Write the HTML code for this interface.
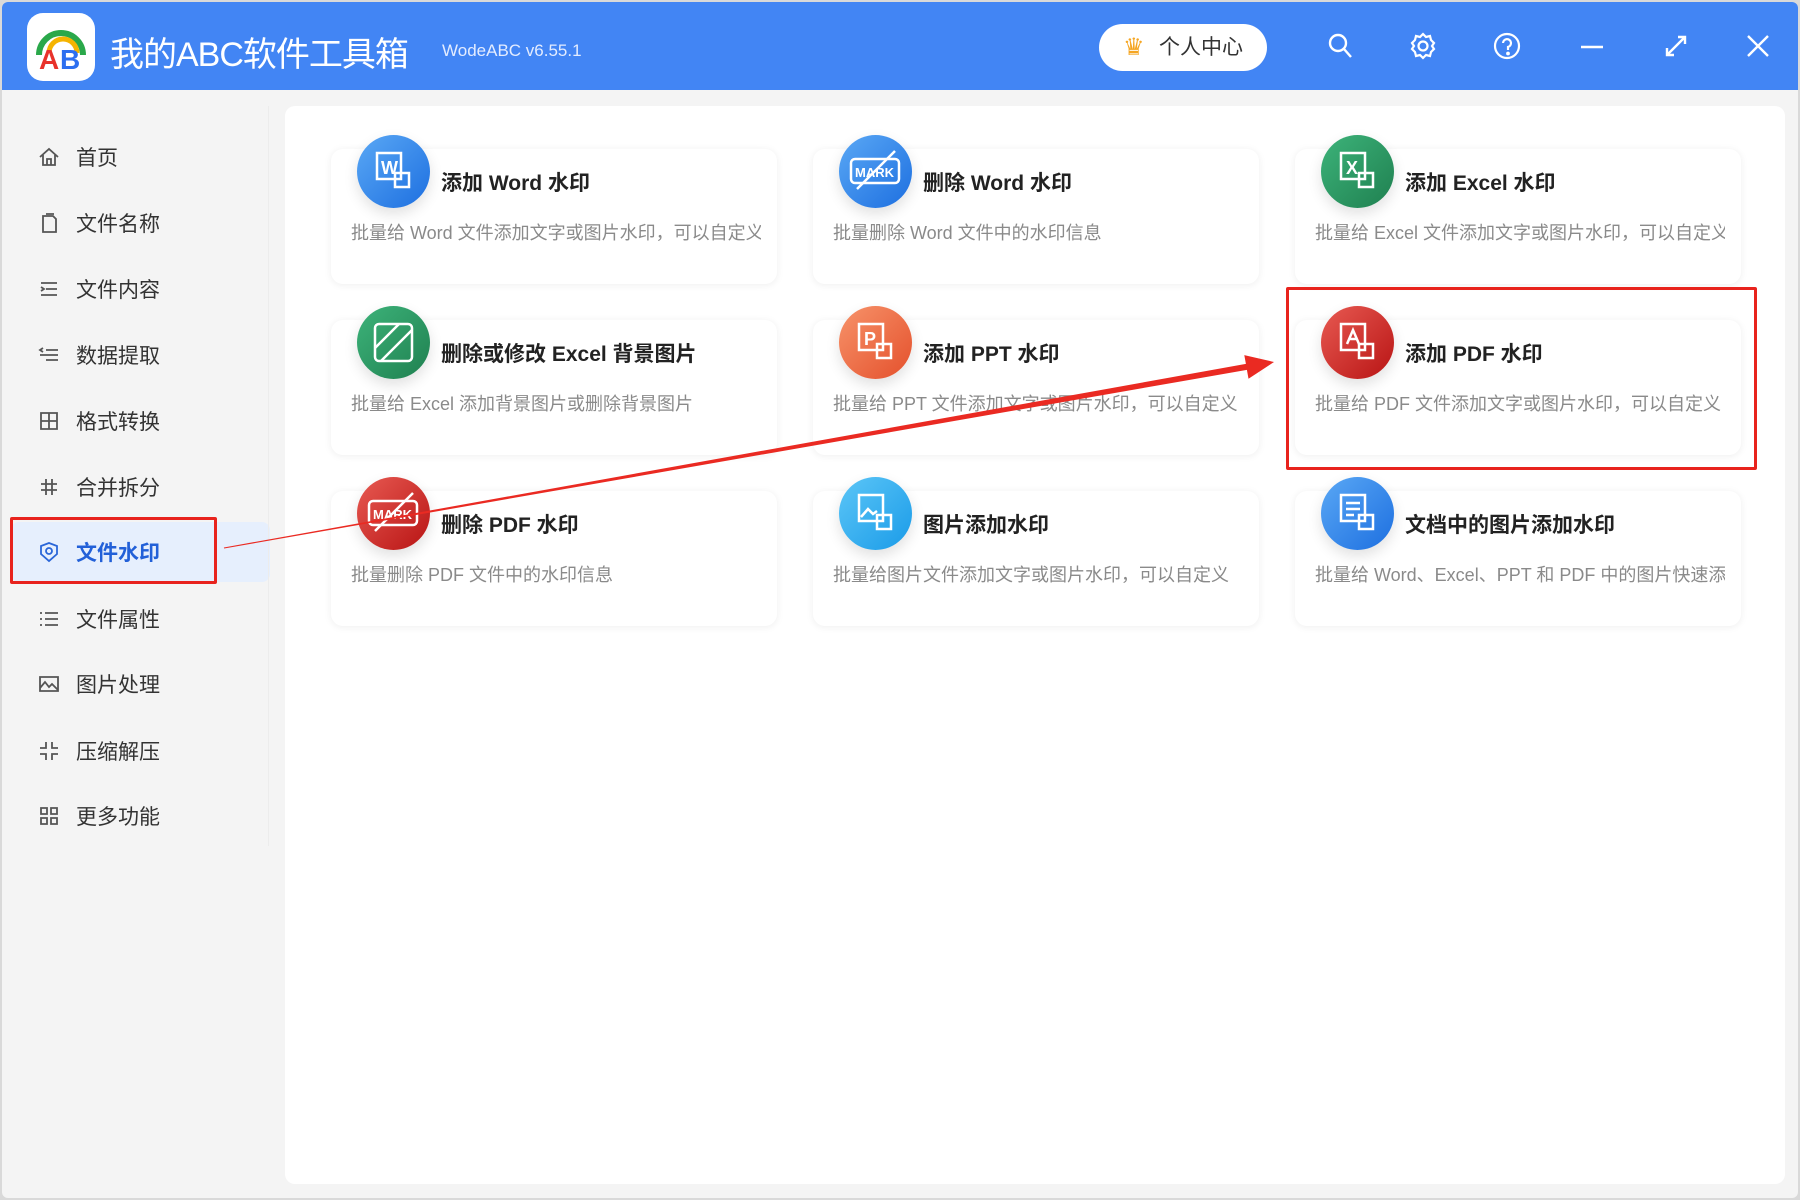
<!DOCTYPE html>
<html><head><meta charset="utf-8"><style>
*{margin:0;padding:0;box-sizing:border-box}
body{width:1800px;height:1200px;background:#d9d9d9;position:relative;overflow:hidden;font-family:"Liberation Sans","Noto Sans CJK SC",sans-serif}
.win{position:absolute;left:2px;top:2px;width:1796px;height:1196px;background:#f4f4f4;border-radius:6px;overflow:hidden}
.hdr{position:absolute;left:0;top:0;width:100%;height:88px;background:#4285f4}
.logo{position:absolute;left:25px;top:11px;width:68px;height:68px;background:#fff;border-radius:16px}
.title{position:absolute;left:108px;top:25px;color:#fff;font-size:34px;letter-spacing:-1px}
.ver{position:absolute;left:440px;top:39px;color:#e3ecff;font-size:17px}
.btn{position:absolute;left:1097px;top:22px;width:168px;height:47px;background:#fff;border-radius:24px;font-size:21px;color:#333;line-height:47px;padding-left:60px}
.ic{position:absolute;top:30px}
.item{position:absolute;left:36px;height:40px;font-size:21px;color:#333;display:flex;align-items:center}
.item svg{margin-right:16px}
.act{position:absolute;left:9px;top:520px;width:259px;height:60px;background:#e6effd;border-radius:8px}
.panel{position:absolute;left:283px;top:104px;width:1500px;height:1078px;background:#fff;border-radius:10px}
.card{position:absolute;width:446px;height:135px;background:#fff;border-radius:12px;box-shadow:0 1px 8px rgba(0,0,0,.07)}
.card .c{position:absolute;left:26px;top:-14px;width:73px;height:73px;border-radius:50%;box-shadow:0 6px 14px rgba(0,0,0,.12)}
.card .t{position:absolute;left:110px;top:18px;font-size:21px;font-weight:bold;color:#222}
.card .d{position:absolute;left:20px;top:70px;width:410px;white-space:nowrap;overflow:hidden;font-size:18px;color:#8a8a8a}
</style></head><body>
<div class="win">
<div class="hdr">
 <div class="logo"><svg width="68" height="68" viewBox="0 0 68 68"><path d="M12 42 A22 22 0 0 1 56 42" fill="none" stroke="#2aa84a" stroke-width="6"/><path d="M22 40 A14 14 0 0 1 50 40" fill="none" stroke="#f5b400" stroke-width="5"/><text x="12" y="56" font-size="28" font-weight="bold" fill="#e8322b" font-family="Liberation Sans">A</text><text x="33" y="56" font-size="28" font-weight="bold" fill="#2d6ff0" font-family="Liberation Sans">B</text></svg></div>
 <div class="title">我的ABC软件工具箱</div>
 <div class="ver">WodeABC v6.55.1</div>
 <div class="btn"><span style="position:absolute;left:24px;top:0;color:#f5a623;font-size:24px">♛</span>个人中心</div>
 <svg class="ic" style="left:1324px" width="28" height="28" viewBox="0 0 28 28" fill="none" stroke="#fff" stroke-width="2.4"><circle cx="12" cy="11" r="8"/><path d="M18 17l7 8"/></svg>
 <svg class="ic" style="left:1407px" width="28" height="28" viewBox="0 0 28 28" fill="none" stroke="#fff" stroke-width="2.2"><circle cx="14" cy="14" r="4.5"/><path d="M14 2l3 3 4-1 1 4 3 3-2 3 2 3-3 3-1 4-4-1-3 3-3-3-4 1-1-4-3-3 2-3-2-3 3-3 1-4 4 1z"/></svg>
 <svg class="ic" style="left:1491px" width="28" height="28" viewBox="0 0 28 28" fill="none" stroke="#fff" stroke-width="2.2"><circle cx="14" cy="14" r="12"/><path d="M10 11a4 4 0 1 1 5 4v3"/><circle cx="15" cy="21.5" r=".8" fill="#fff"/></svg>
 <svg class="ic" style="left:1576px" width="28" height="28" viewBox="0 0 28 28" stroke="#fff" stroke-width="2.4"><path d="M3 15h22"/></svg>
 <svg class="ic" style="left:1660px" width="28" height="28" viewBox="0 0 28 28" fill="none" stroke="#fff" stroke-width="2.4"><path d="M5 23L23 5M16 5h7v7M5 16v7h7"/></svg>
 <svg class="ic" style="left:1742px" width="28" height="28" viewBox="0 0 28 28" stroke="#fff" stroke-width="2.4"><path d="M4 4l20 20M24 4L4 24"/></svg>
</div>
<div class="act"></div>
<div style="position:absolute;left:266px;top:104px;width:1px;height:740px;background:#ececec"></div>
<div class="item" style="top:135px"><svg width="22" height="22" viewBox="0 0 22 22" fill="none" stroke="#555" stroke-width="1.8"><path d="M2 11L11 3l9 8M5 9v10h12V9M9 19v-6h4v6"/></svg>首页</div>
<div class="item" style="top:201px"><svg width="22" height="22" viewBox="0 0 22 22" fill="none" stroke="#555" stroke-width="1.8"><path d="M5 4h10l3 3v13H5zM8 2h8"/></svg>文件名称</div>
<div class="item" style="top:267px"><svg width="22" height="22" viewBox="0 0 22 22" fill="none" stroke="#555" stroke-width="1.8"><path d="M3 5h16M8 11h11M3 17h16M3 9l3 2-3 2"/></svg>文件内容</div>
<div class="item" style="top:333px"><svg width="22" height="22" viewBox="0 0 22 22" fill="none" stroke="#555" stroke-width="1.8"><path d="M8 6h12M2 11h18M8 16h12M5 4l-3 2 3 2"/></svg>数据提取</div>
<div class="item" style="top:399px"><svg width="22" height="22" viewBox="0 0 22 22" fill="none" stroke="#555" stroke-width="1.8"><path d="M3 3h16v16H3zM11 3v16M3 11h16"/></svg>格式转换</div>
<div class="item" style="top:465px"><svg width="22" height="22" viewBox="0 0 22 22" fill="none" stroke="#555" stroke-width="1.8"><path d="M8 3v16M14 3v16M3 8h16M3 14h16"/></svg>合并拆分</div>
<div class="item" style="top:530px;color:#2260d8;font-weight:bold"><svg width="22" height="22" viewBox="0 0 22 22" fill="none" stroke="#2a66d8" stroke-width="1.8"><path d="M11 2l8 3v8l-8 7-8-7V5z"/><circle cx="11" cy="10" r="3"/></svg>文件水印</div>
<div class="item" style="top:597px"><svg width="22" height="22" viewBox="0 0 22 22" fill="none" stroke="#555" stroke-width="1.8"><path d="M7 5h13M7 11h13M7 17h13M2 5h2M2 11h2M2 17h2"/></svg>文件属性</div>
<div class="item" style="top:662px"><svg width="22" height="22" viewBox="0 0 22 22" fill="none" stroke="#555" stroke-width="1.8"><path d="M2 4h18v14H2zM2 15l5-6 4 5 3-3 6 6"/></svg>图片处理</div>
<div class="item" style="top:729px"><svg width="22" height="22" viewBox="0 0 22 22" fill="none" stroke="#555" stroke-width="1.8"><path d="M8 2v6H2M14 2v6h6M8 20v-6H2M14 20v-6h6"/></svg>压缩解压</div>
<div class="item" style="top:794px"><svg width="22" height="22" viewBox="0 0 22 22" fill="none" stroke="#555" stroke-width="1.8"><path d="M3 3h6v6H3zM13 3h6v6h-6zM3 13h6v6H3zM13 13h6v6h-6z"/></svg>更多功能</div>
<div style="position:absolute;left:8px;top:515px;width:207px;height:67px;border:3.5px solid #e8231d;border-radius:2px"></div>

<div class="panel"></div>
<div style="position:absolute;left:0;top:0">
<div class="card" style="left:329px;top:147px"><div class="c" style="background:linear-gradient(135deg,#5aa8f5,#1d6fe0)"><svg width="73" height="73" viewBox="0 0 73 73" fill="none" stroke="#fff" stroke-width="2.5"><rect x="20" y="18" width="24" height="26"/><text x="24" y="39" fill="#fff" stroke="none" font-size="18" font-weight="bold" font-family="Liberation Sans">W</text><rect x="38" y="38" width="14" height="14"/></svg></div><div class="t">添加 Word 水印</div><div class="d">批量给 Word 文件添加文字或图片水印，可以自定义</div></div>
<div class="card" style="left:811px;top:147px"><div class="c" style="background:linear-gradient(135deg,#5aa8f5,#1d6fe0)"><svg width="73" height="73" viewBox="0 0 73 73" fill="none" stroke="#fff" stroke-width="2.5"><rect x="12" y="24" width="48" height="24" rx="4"/><text x="16" y="42" fill="#fff" stroke="none" font-size="13" font-weight="bold" font-family="Liberation Sans">MARK</text><path d="M18 54L56 16"/></svg></div><div class="t">删除 Word 水印</div><div class="d">批量删除 Word 文件中的水印信息</div></div>
<div class="card" style="left:1293px;top:147px"><div class="c" style="background:linear-gradient(135deg,#3db37a,#1f8050)"><svg width="73" height="73" viewBox="0 0 73 73" fill="none" stroke="#fff" stroke-width="2.5"><rect x="20" y="18" width="24" height="26"/><text x="25" y="39" fill="#fff" stroke="none" font-size="18" font-weight="bold" font-family="Liberation Sans">X</text><rect x="38" y="38" width="14" height="14"/></svg></div><div class="t">添加 Excel 水印</div><div class="d">批量给 Excel 文件添加文字或图片水印，可以自定义</div></div>

<div class="card" style="left:329px;top:318px"><div class="c" style="background:linear-gradient(135deg,#3db37a,#1f8050)"><svg width="73" height="73" viewBox="0 0 73 73" fill="none" stroke="#fff" stroke-width="2.5"><rect x="18" y="18" width="37" height="37" rx="4"/><path d="M18 42L42 18M24 55L55 24"/></svg></div><div class="t">删除或修改 Excel 背景图片</div><div class="d">批量给 Excel 添加背景图片或删除背景图片</div></div>
<div class="card" style="left:811px;top:318px"><div class="c" style="background:linear-gradient(135deg,#f7936a,#e4502c)"><svg width="73" height="73" viewBox="0 0 73 73" fill="none" stroke="#fff" stroke-width="2.5"><rect x="20" y="18" width="24" height="26"/><text x="25" y="39" fill="#fff" stroke="none" font-size="18" font-weight="bold" font-family="Liberation Sans">P</text><rect x="38" y="38" width="14" height="14"/></svg></div><div class="t">添加 PPT 水印</div><div class="d">批量给 PPT 文件添加文字或图片水印，可以自定义</div></div>
<div class="card" style="left:1293px;top:318px"><div class="c" style="background:linear-gradient(135deg,#e85a52,#b81414)"><svg width="73" height="73" viewBox="0 0 73 73" fill="none" stroke="#fff" stroke-width="2.5"><rect x="20" y="18" width="24" height="26"/><path d="M26 38l6-14 6 14M28 33h8"/><rect x="38" y="38" width="14" height="14"/></svg></div><div class="t">添加 PDF 水印</div><div class="d">批量给 PDF 文件添加文字或图片水印，可以自定义</div></div>

<div class="card" style="left:329px;top:489px"><div class="c" style="background:linear-gradient(135deg,#e85a52,#b81414)"><svg width="73" height="73" viewBox="0 0 73 73" fill="none" stroke="#fff" stroke-width="2.5"><rect x="12" y="24" width="48" height="24" rx="4"/><text x="16" y="42" fill="#fff" stroke="none" font-size="13" font-weight="bold" font-family="Liberation Sans">MARK</text><path d="M18 54L56 16"/></svg></div><div class="t">删除 PDF 水印</div><div class="d">批量删除 PDF 文件中的水印信息</div></div>
<div class="card" style="left:811px;top:489px"><div class="c" style="background:linear-gradient(135deg,#5cc6f7,#1a9be8)"><svg width="73" height="73" viewBox="0 0 73 73" fill="none" stroke="#fff" stroke-width="2.5"><rect x="20" y="18" width="24" height="26"/><path d="M22 40l7-8 5 5 4-3"/><rect x="38" y="38" width="14" height="14"/></svg></div><div class="t">图片添加水印</div><div class="d">批量给图片文件添加文字或图片水印，可以自定义</div></div>
<div class="card" style="left:1293px;top:489px"><div class="c" style="background:linear-gradient(135deg,#5aa8f5,#1d6fe0)"><svg width="73" height="73" viewBox="0 0 73 73" fill="none" stroke="#fff" stroke-width="2.5"><rect x="20" y="18" width="24" height="26"/><path d="M25 26h14M25 32h14M25 38h8"/><rect x="38" y="38" width="14" height="14"/></svg></div><div class="t">文档中的图片添加水印</div><div class="d">批量给 Word、Excel、PPT 和 PDF 中的图片快速添加</div></div>
</div>
<div style="position:absolute;left:1284px;top:285px;width:471px;height:183px;border:3.5px solid #e8231d;border-radius:2px"></div>
</div>
<svg style="position:absolute;left:0;top:0" width="1800" height="1200"><polygon points="223.9,547.5 1245.9,363.9 1244.3,355.1 1274,362 1248.5,378.7 1246.9,369.9 224.1,548.5" fill="#ea2a22"/></svg>
</body></html>
